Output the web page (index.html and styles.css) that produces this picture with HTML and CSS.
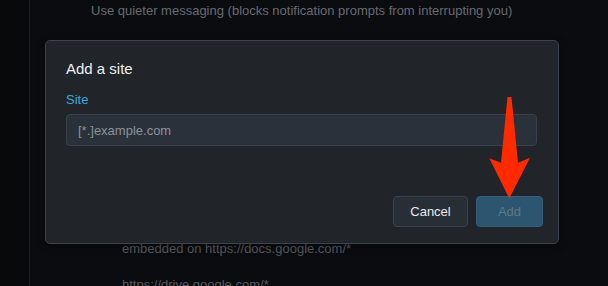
FILE: index.html
```html
<!DOCTYPE html>
<html lang="en">
<head>
<meta charset="utf-8">
<title>Add a site</title>
<link rel="stylesheet" href="styles.css">
</head>
<body>
<div class="page">
  <aside class="rail"></aside>
  <main class="content">
    <p class="option">Use quieter messaging (blocks notification prompts from interrupting you)</p>
    <ul class="sites">
      <li>embedded on https://docs.google.com/*</li>
      <li>https://drive.google.com/*</li>
    </ul>
  </main>
</div>

<div class="dialog" role="dialog" aria-labelledby="dlg-title">
  <h2 class="dialog-title" id="dlg-title">Add a site</h2>
  <label class="field-label" for="site">Site</label>
  <input class="field-input" id="site" type="text" placeholder="[*.]example.com">
  <div class="dialog-actions">
    <button class="btn btn-cancel" type="button">Cancel</button>
    <button class="btn btn-add" type="button" disabled>Add</button>
  </div>
</div>

<svg class="arrow" width="44" height="104" viewBox="0 0 44 104" aria-hidden="true">
  <polygon points="19.5,1 23.5,1 30,66.7 42,61.7 21.3,102.5 1.3,62.3 13,66.7" fill="#ff2a00"/>
</svg>
</body>
</html>
```

FILE: styles.css
```css
* { box-sizing: border-box; }

html, body {
  margin: 0;
  padding: 0;
  height: 100%;
}

body {
  background: #0b0c0f;
  font-family: "Liberation Sans", Arial, sans-serif;
  overflow: hidden;
}

.page {
  display: flex;
  height: 286px;
}

.rail {
  width: 30px;
  flex: 0 0 30px;
  background: #08090b;
  border-right: 1px solid #1b1d21;
}

.content {
  flex: 1;
  padding-left: 61px;
}

.option {
  margin: 3px 0 0;
  font-size: 13px;
  line-height: 16px;
  color: #676b71;
}

.sites {
  list-style: none;
  margin: 222px 0 0;
  padding: 0 0 0 31px;
  font-size: 13px;
  line-height: 16px;
  color: #56595f;
}

.sites li + li {
  margin-top: 20px;
}

.dialog {
  position: absolute;
  left: 45px;
  top: 40px;
  width: 514px;
  height: 204px;
  display: flex;
  flex-direction: column;
  padding: 19px 20px 16px;
  background: #212428;
  border: 1px solid #3b444e;
  border-radius: 5px;
  box-shadow: 0 2px 8px rgba(0, 0, 0, 0.4);
}

.dialog-title {
  margin: 0;
  font-size: 15px;
  font-weight: normal;
  line-height: 18px;
  color: #eceef0;
}

.field-label {
  margin-top: 14px;
  font-size: 13px;
  line-height: 16px;
  color: #3ea6da;
}

.field-input {
  margin-top: 6px;
  width: 471px;
  height: 32px;
  padding: 0 11px;
  background: #2a313a;
  border: 1px solid #38414b;
  border-radius: 4px;
  font-family: "Liberation Sans", Arial, sans-serif;
  font-size: 13px;
  color: #e6e8ea;
  outline: none;
}

.field-input::placeholder {
  color: #8b9299;
  opacity: 1;
}

.dialog-actions {
  margin-top: auto;
  margin-right: -5px;
  display: flex;
  justify-content: flex-end;
  gap: 8px;
}

.btn {
  height: 31px;
  padding: 0;
  border-radius: 4px;
  font-family: "Liberation Sans", Arial, sans-serif;
  font-size: 13px;
  line-height: 29px;
}

.btn-cancel {
  width: 75px;
  background: #272e36;
  border: 1px solid #3a424b;
  color: #e8eaed;
}

.btn-add {
  width: 67px;
  background: #2c5670;
  border: 1px solid #325f7a;
  color: #5f7687;
}

.arrow {
  position: absolute;
  left: 488px;
  top: 96px;
}
```
